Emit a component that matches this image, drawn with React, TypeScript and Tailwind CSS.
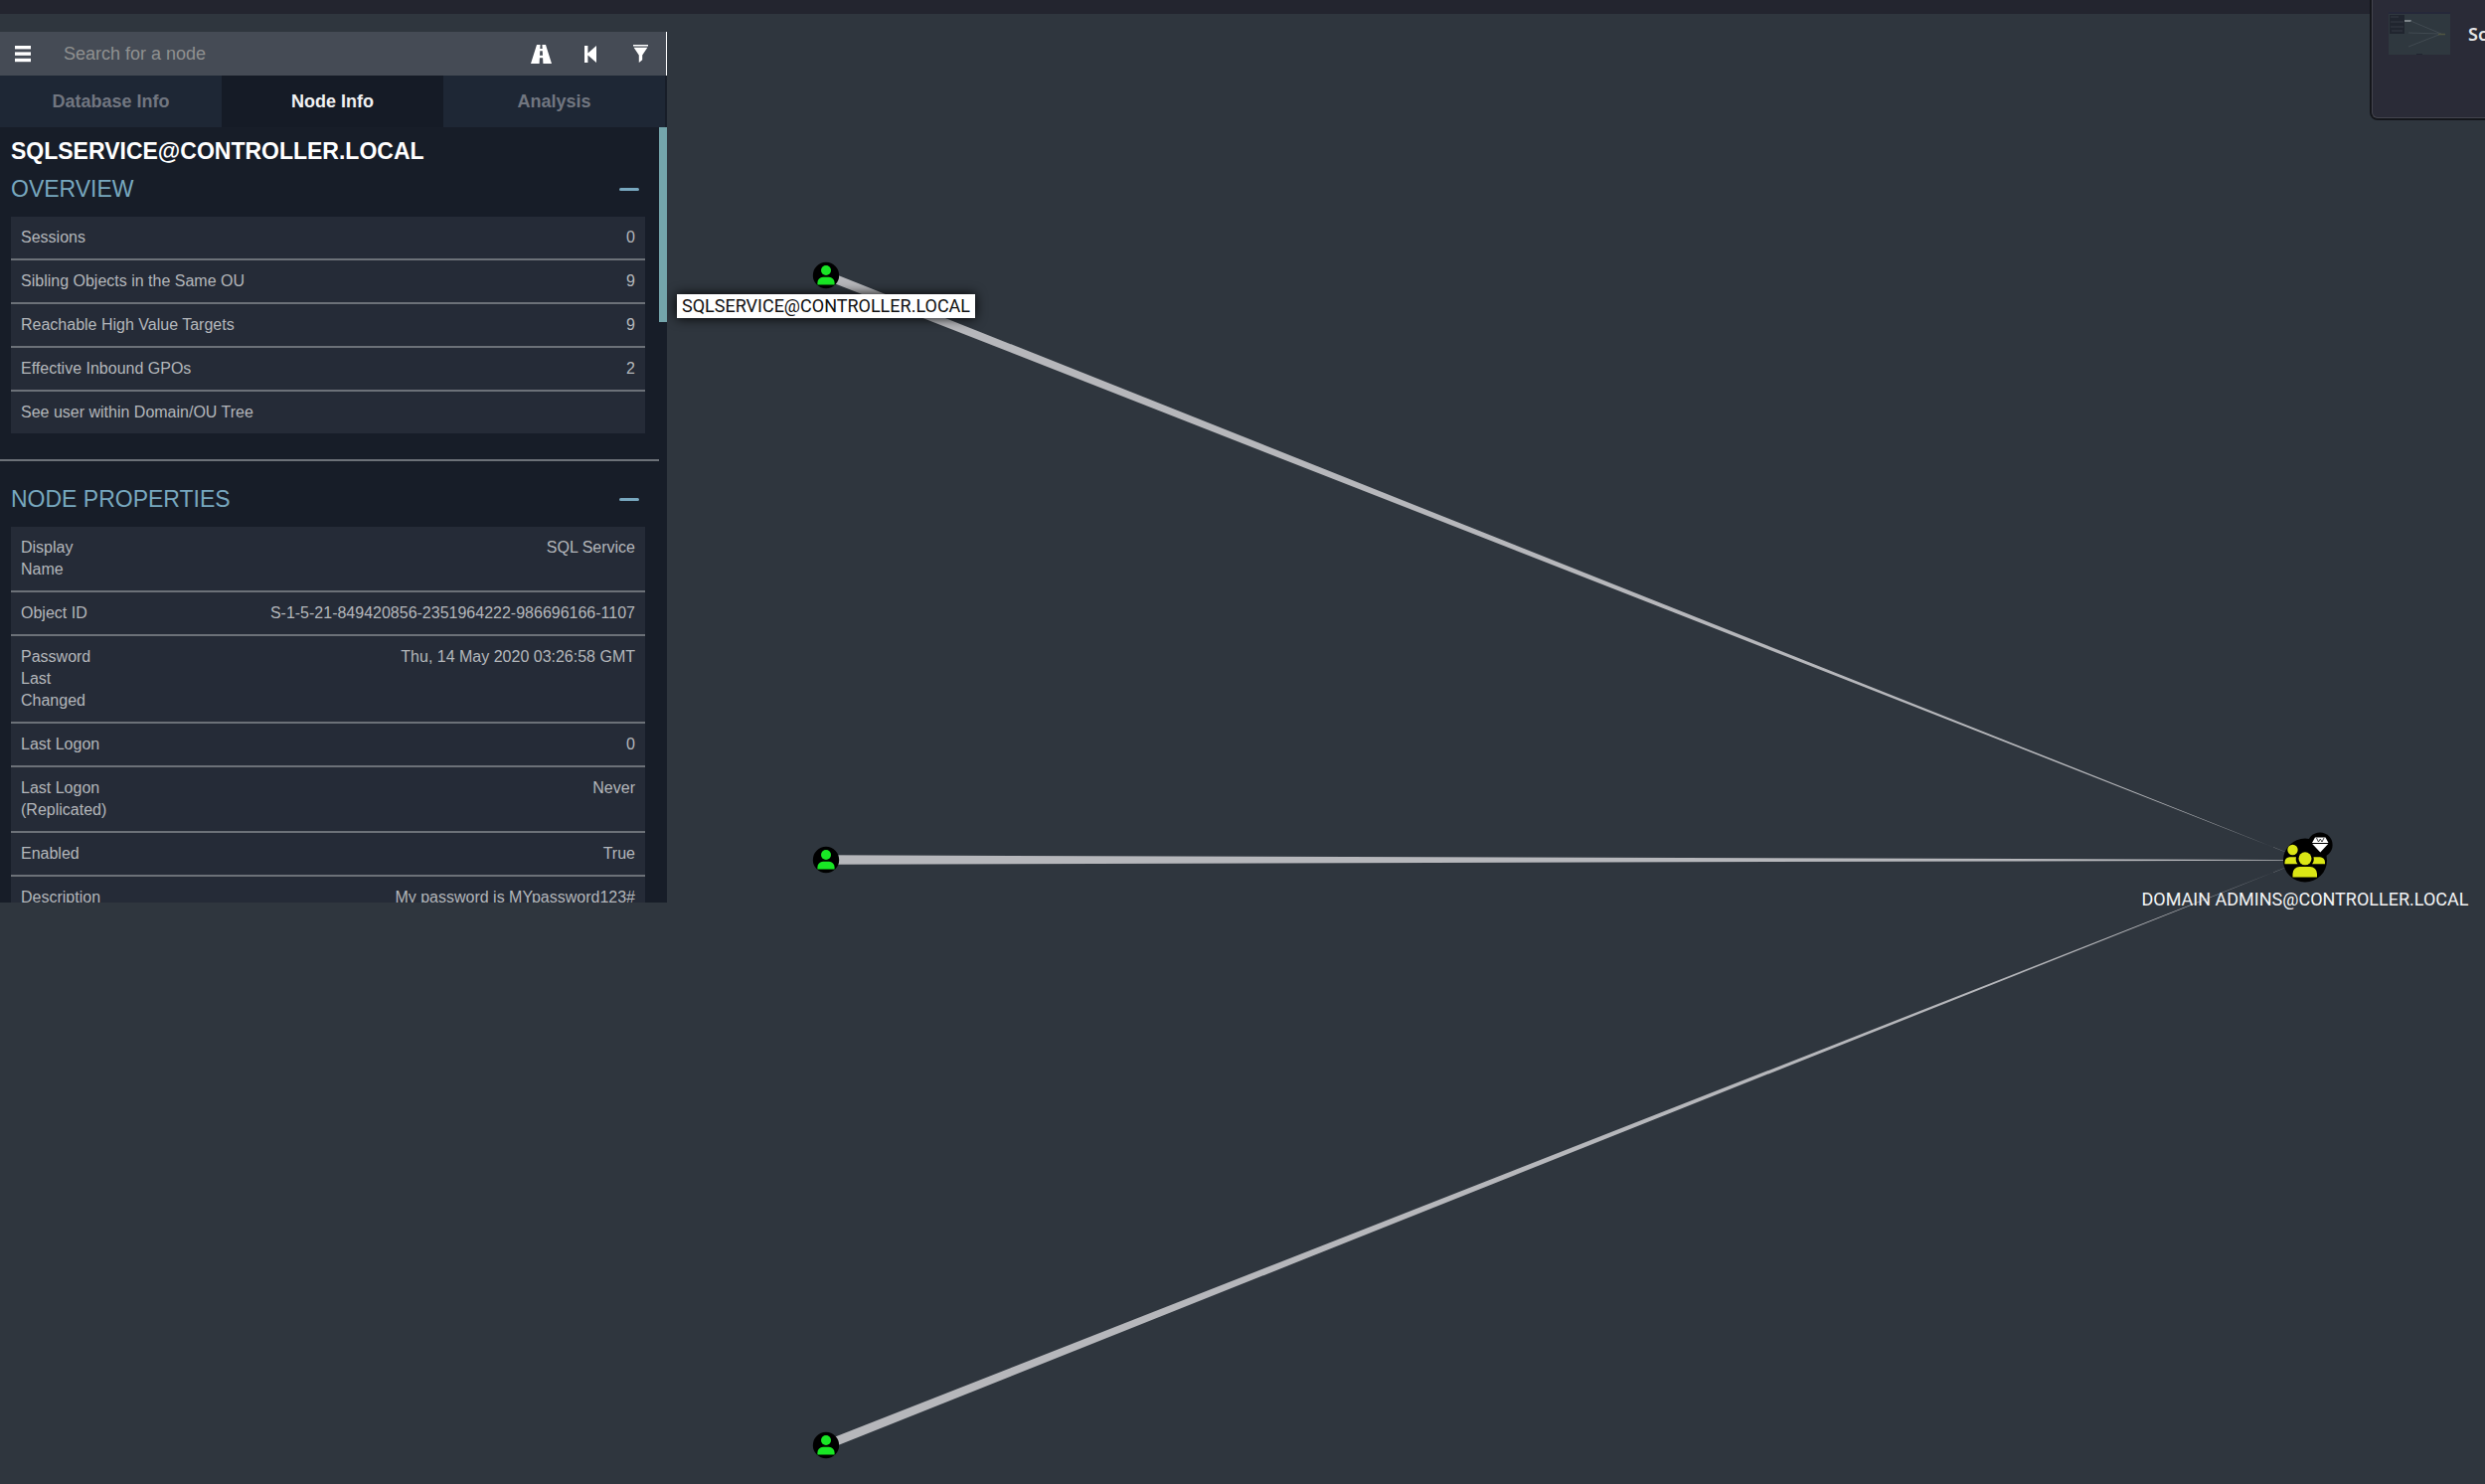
import React from "react";

type Row = { label: string; value: string };

const overview: Row[] = [
  { label: "Sessions", value: "0" },
  { label: "Sibling Objects in the Same OU", value: "9" },
  { label: "Reachable High Value Targets", value: "9" },
  { label: "Effective Inbound GPOs", value: "2" },
  { label: "See user within Domain/OU Tree", value: "" },
];

const properties: Row[] = [
  { label: "Display Name", value: "SQL Service" },
  { label: "Object ID", value: "S-1-5-21-849420856-2351964222-986696166-1107" },
  { label: "Password Last Changed", value: "Thu, 14 May 2020 03:26:58 GMT" },
  { label: "Last Logon", value: "0" },
  { label: "Last Logon (Replicated)", value: "Never" },
  { label: "Enabled", value: "True" },
  { label: "Description", value: "My password is MYpassword123#" },
];

const tabs = ["Database Info", "Node Info", "Analysis"];

function MenuIcon() {
  return (
    <svg width="16" height="17" viewBox="0 0 16 17" fill="#fff" aria-hidden="true">
      <rect y="0" width="16" height="3.4" />
      <rect y="6.4" width="16" height="3.4" />
      <rect y="12.8" width="16" height="3.4" />
    </svg>
  );
}

function RoadIcon() {
  return (
    <svg width="21" height="19" viewBox="0 0 21 19" fill="#fff" aria-hidden="true">
      <path
        fillRule="evenodd"
        d="M6 0H9.6L9.3 4H11.7L11.4 0H15L21 19H12.4L12.1 13.2H8.9L8.6 19H0ZM9.3 6.2L9 10.8H12L11.7 6.2Z"
      />
    </svg>
  );
}

function BackIcon() {
  return (
    <svg width="12" height="17" viewBox="0 0 12 17" fill="#fff" aria-hidden="true">
      <path d="M0 0H3.4V7.4L12 0V17L3.4 9.6V17H0Z" />
    </svg>
  );
}

function FilterIcon() {
  return (
    <svg width="15" height="18" viewBox="0 0 15 18" fill="#fff" aria-hidden="true">
      <path d="M0 0H15V1.6H0ZM0.6 2.8H14.4L9.2 10.4V15.2L5.8 18V10.4Z" />
    </svg>
  );
}

function Section({ title, rows, wrap }: { title: string; rows: Row[]; wrap?: boolean }) {
  return (
    <section className="pr-[14px] pl-[11px]">
      <div className="flex h-10 items-center justify-between pr-[6px]">
        <h2 className="text-[23px] leading-6 text-[#78a8bf]">{title}</h2>
        <button type="button" aria-label={"Collapse " + title} className="flex h-6 w-5 items-center">
          <span className="h-[3px] w-full rounded-sm bg-[#78a8bf]" />
        </button>
      </div>
      <table className="mt-2 w-full border-collapse bg-[#252b37] text-left text-[#b4b7bb]">
        <tbody>
          {rows.map((row) => (
            <tr key={row.label} className="border-b-2 border-[#6c7178] align-top last:border-b-0">
              <th
                scope="row"
                className={
                  wrap ? "w-[106px] py-[10px] pl-[10px] font-normal" : "py-[10px] pl-[10px] font-normal"
                }
              >
                {row.label}
              </th>
              <td className="py-[10px] pr-[10px] text-right">{row.value}</td>
            </tr>
          ))}
        </tbody>
      </table>
    </section>
  );
}

function UserNode({ x, y }: { x: number; y: number }) {
  return (
    <g transform={`translate(${x} ${y})`}>
      <circle r="13.2" fill="#000" />
      <circle cy="-5" r="5" fill="#19e625" />
      <path d="M-8.6 9.6V7.4A5.6 5.6 0 0 1 -3 1.8H3A5.6 5.6 0 0 1 8.6 7.4V9.6Z" fill="#19e625" />
    </g>
  );
}

function Graph() {
  return (
    <svg
      className="absolute inset-0 h-full w-full"
      viewBox="0 0 2500 1493"
      preserveAspectRatio="xMidYMid slice"
      role="img"
      aria-label="Node graph"
    >
      <g fill="#b6b7bb">
        <path d="M829.4 281.2L832.6 272.8L2319 865Z" />
        <path d="M831 860.3V869.7L2319 865.6V865Z" />
        <path d="M829.4 1449.8L832.6 1458.2L2319 865Z" />
      </g>
      <UserNode x={831} y={277} />
      <UserNode x={831} y={865} />
      <UserNode x={831} y={1454} />

      <rect
        x="681"
        y="296"
        width="300"
        height="24"
        fill="#fff"
        style={{ filter: "drop-shadow(0 0 6px #000)" }}
      />
      <text x="831" y="314" textAnchor="middle" fontSize="18" fill="#111" fontFamily="Roboto, sans-serif">
        SQLSERVICE@CONTROLLER.LOCAL
      </text>

      <circle cx="2319" cy="865.5" r="22" fill="#000" />
      <circle cx="2334" cy="850" r="12.6" fill="#000" />
      <g fill="#dbe615">
        <circle cx="2306.5" cy="855" r="5.2" />
        <path d="M2298.5 869.3V867.5A5 5 0 0 1 2303.5 862.3H2310A8 8 0 0 0 2311.5 869.3Z" />
        <path d="M2339 869.3V867.5A5 5 0 0 0 2334 862.3H2327.5A8 8 0 0 1 2326 869.3Z" />
        <circle cx="2319" cy="863.8" r="6.5" />
        <path d="M2306.5 882.5V879A7 7 0 0 1 2313.5 872H2324A7 7 0 0 1 2331 879V882.5Z" />
      </g>
      <path d="M2329 842.5H2339.5L2342.5 848H2326ZM2326.2 849H2342.2L2334.3 857.5Z" fill="#fff" />
      <path d="M2330.5 843L2332.5 847L2334.3 844L2336 847L2338 843" fill="none" stroke="#333" strokeWidth="0.9" />
      <text x="2319" y="911" textAnchor="middle" fontSize="18" fill="#f3f4f5" fontFamily="Roboto, sans-serif">
        DOMAIN ADMINS@CONTROLLER.LOCAL
      </text>
    </svg>
  );
}

function Notification() {
  return (
    <div className="absolute top-0 right-0 flex h-[119px] w-[114px] gap-[18px] overflow-hidden rounded-bl-md border-b border-l border-[#43444d] bg-[#2a2b37] pt-3 pl-4 shadow-[0_0_0_2px_#14161b]">
      <svg className="shrink-0" width="62" height="43" viewBox="0 0 62 43" aria-hidden="true">
        <rect width="62" height="43" fill="#2f383f" />
        <rect width="62" height="2" fill="#25283a" />
        <rect x="1" y="3" width="15" height="19" fill="#20252f" />
        <path d="M2 5H10M2 10H15M2 15H15M3 19H14" stroke="#343b44" strokeWidth="1" />
        <path d="M16 9H23" stroke="#7d858a" strokeWidth="2" />
        <path d="M22 9L53 22L20 21M53 22L20 35" fill="none" stroke="#414a51" strokeWidth="1" />
        <path d="M50 22.5H57" stroke="#4f5540" strokeWidth="1.5" />
        <path d="M28 42.5H34" stroke="#20252f" strokeWidth="1" />
      </svg>
      <p className="pt-2 font-['Noto_Sans',sans-serif] text-[18px] leading-7 font-semibold text-[#e4e4e6]">Sc</p>
    </div>
  );
}

export default function App() {
  return (
    <div className="relative flex min-h-screen flex-col overflow-hidden bg-[#2f363e] font-['Liberation_Sans',Arial,sans-serif] text-[16px] leading-[22px]">
      <header className="h-[14px] bg-[#23252f]" />
      <main className="flex flex-1 flex-col pt-[18px]">
        <Graph />
        <aside className="relative w-[671px] bg-[#171d28]">
          <div className="flex h-11 items-center border-r border-white bg-[#454b55]">
            <button type="button" aria-label="Menu" className="flex h-11 w-12 items-center pl-[15px]">
              <MenuIcon />
            </button>
            <input
              type="text"
              aria-label="Search for a node"
              placeholder="Search for a node"
              className="h-11 min-w-0 flex-1 bg-transparent px-4 text-[18px] text-white outline-none placeholder:text-[#8f9090]"
            />
            <button type="button" aria-label="Pathfinding" className="flex h-11 w-[52px] items-center justify-center">
              <RoadIcon />
            </button>
            <button type="button" aria-label="Back" className="flex h-11 w-[48px] items-center justify-center">
              <BackIcon />
            </button>
            <button type="button" aria-label="Filter" className="flex h-11 w-[52px] items-center justify-center">
              <FilterIcon />
            </button>
          </div>
          <div role="tablist" className="grid grid-cols-3 pr-[2px] text-[18px] font-bold">
            {tabs.map((tab) => (
              <button
                key={tab}
                type="button"
                role="tab"
                aria-selected={tab === "Node Info"}
                className={
                  tab === "Node Info"
                    ? "h-[52px] bg-[#151b26] text-[#f0f1f2]"
                    : "h-[52px] bg-[#1e2735] text-[#717680]"
                }
              >
                {tab}
              </button>
            ))}
          </div>
          <div className="flex h-[780px]">
            <div className="min-w-0 flex-1 overflow-hidden">
              <h1 className="pt-[11px] pb-[5px] pl-[11px] text-[23px] leading-[26px] font-bold text-white">
                SQLSERVICE@CONTROLLER.LOCAL
              </h1>
              <Section title="OVERVIEW" rows={overview} />
              <hr className="mt-[26px] mb-[18px] border-t-2 border-[#6c7178]" />
              <Section title="NODE PROPERTIES" rows={properties} wrap />
            </div>
            <div className="w-2">
              <div className="h-[196px] bg-[#74a5ab]" />
            </div>
          </div>
        </aside>
      </main>
      <Notification />
    </div>
  );
}
